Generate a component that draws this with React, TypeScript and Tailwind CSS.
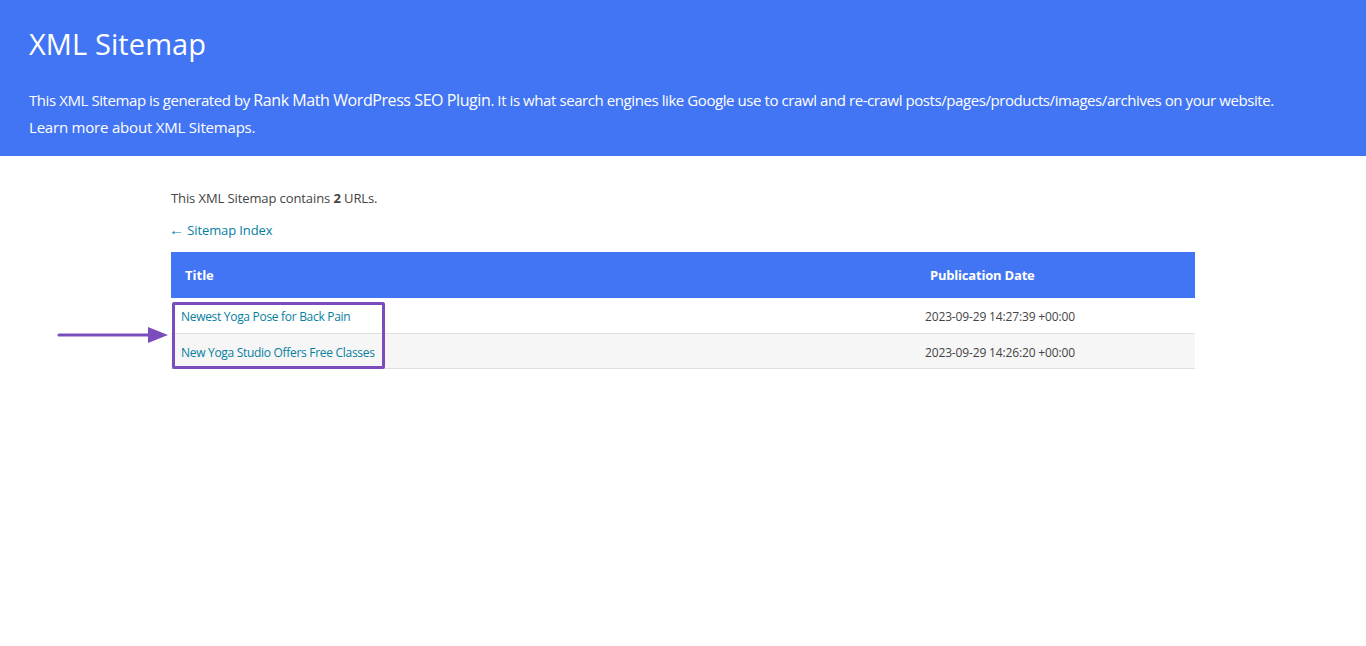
export default function App() {
  const rows = [
    { title: "Newest Yoga Pose for Back Pain", date: "2023-09-29 14:27:39 +00:00" },
    { title: "New Yoga Studio Offers Free Classes", date: "2023-09-29 14:26:20 +00:00" },
  ];

  return (
    <div className="min-h-[646px] bg-white font-['Open_Sans',sans-serif] text-[#444]">
      <header className="h-[156px] bg-[#4275f4] px-[29px] pt-[25px] text-white">
        <h1 className="text-[29px] leading-[38px] font-normal tracking-[0.1px]">XML Sitemap</h1>
        <p className="mt-[24px] text-[15px] leading-[27px] tracking-[-0.42px]">
          This XML Sitemap is generated by <span className="text-[16px]">Rank Math WordPress SEO Plugin</span>. It is
          what search engines like Google use to crawl and re-crawl posts/pages/products/images/archives on your
          website.
        </p>
        <p className="text-[15px] leading-[27px] tracking-[-0.2px]">Learn more about XML Sitemaps.</p>
      </header>

      <main className="mx-auto w-[1024px] pt-[32px]">
        <p className="text-[13px] leading-[20px] tracking-[-0.1px]">
          This XML Sitemap contains <strong>2</strong> URLs.
        </p>
        <a className="mt-[12px] block h-[20px] text-[13px] leading-[20px] tracking-[-0.1px] text-[#05809e]">
          <span className="-ml-[2px] text-[15px] leading-[1]">←</span> Sitemap Index
        </a>

        <div className="relative mt-[12px]">
          <table className="w-full border-collapse text-[12px]">
            <thead>
              <tr className="h-[46px] bg-[#4275f4] text-left text-white">
                <th className="w-[744px] pl-[14px] pt-[2px] text-[13px] font-bold">Title</th>
                <th className="pl-[15px] pt-[2px] text-[13px] font-bold tracking-[-0.2px]">Publication Date</th>
              </tr>
            </thead>
            <tbody>
              {rows.map((r, i) => (
                <tr
                  key={r.title}
                  className={`h-[35px] border-b border-[#e0e0e0] ${i % 2 === 1 ? "bg-[#f6f6f6]" : "bg-white"}`}
                >
                  <td className="pl-[10px] pt-[4px] tracking-[-0.3px] text-[#05809e]">{r.title}</td>
                  <td className="pl-[10px] pt-[4px] tracking-[-0.15px]">{r.date}</td>
                </tr>
              ))}
            </tbody>
          </table>

          {/* annotation */}
          <div className="absolute left-[1px] top-[50px] h-[67px] w-[213px] rounded-[2px] border-[3px] border-[#7b4cbd]" />
          <svg className="absolute left-[-116px] top-[73px]" width="115" height="20" viewBox="0 0 115 20">
            <line x1="4" y1="10" x2="96" y2="10" stroke="#7b4cbd" strokeWidth="3" strokeLinecap="round" />
            <polygon points="93,2 113,10 93,18" fill="#7b4cbd" />
          </svg>
        </div>
      </main>
    </div>
  );
}
